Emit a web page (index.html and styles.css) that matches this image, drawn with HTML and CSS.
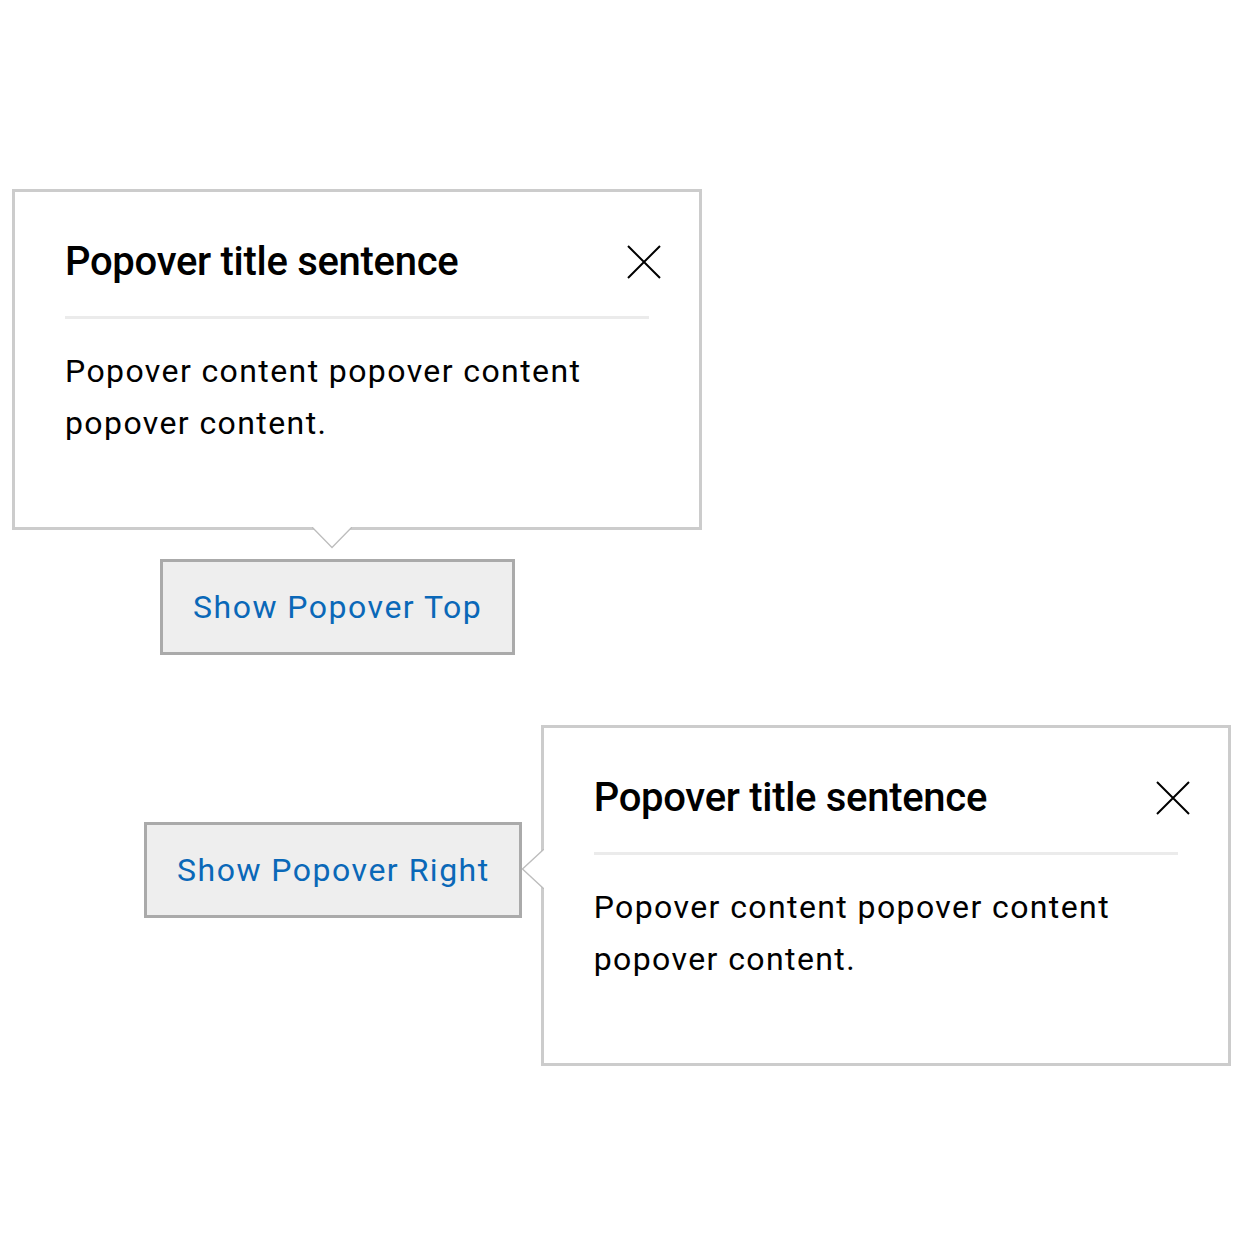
FILE: index.html
```html
<!DOCTYPE html>
<html lang="en">
<head>
<meta charset="utf-8">
<title>Popovers</title>
<link rel="stylesheet" href="styles.css">
</head>
<body>
<main class="page">
  <section class="demo demo-top">
    <div class="popover">
      <div class="popover-header">
        <h2 class="popover-title">Popover title sentence</h2>
        <button class="popover-close" aria-label="Close">
          <svg width="34" height="34" viewBox="0 0 34 34"><path d="M1 1 L33 33 M33 1 L1 33" stroke="#000" stroke-width="2" fill="none"/></svg>
        </button>
      </div>
      <div class="popover-divider"></div>
      <p class="popover-body">Popover content popover content popover content.</p>
      <svg class="arrow arrow-down" width="40" height="22" viewBox="0 0 40 22"><polygon points="0,0 40,0 20,20" fill="#fff"/><polyline points="0,0 20,20.5 40,0" fill="none" stroke="#bdbdbd" stroke-width="1.3"/></svg>
    </div>
    <button class="trigger trigger-top">Show Popover Top</button>
  </section>

  <section class="demo demo-right">
    <button class="trigger trigger-right">Show Popover Right</button>
    <div class="popover">
      <div class="popover-header">
        <h2 class="popover-title">Popover title sentence</h2>
        <button class="popover-close" aria-label="Close">
          <svg width="34" height="34" viewBox="0 0 34 34"><path d="M1 1 L33 33 M33 1 L1 33" stroke="#000" stroke-width="2" fill="none"/></svg>
        </button>
      </div>
      <div class="popover-divider"></div>
      <p class="popover-body">Popover content popover content popover content.</p>
      <svg class="arrow arrow-left" width="22" height="40" viewBox="0 0 22 40"><polygon points="22,0 22,40 2,20" fill="#fff"/><polyline points="22,0 0.5,20 22,40" fill="none" stroke="#bdbdbd" stroke-width="1.3"/></svg>
    </div>
  </section>
</main>
</body>
</html>
```

FILE: styles.css
```css
* { box-sizing: border-box; }

html, body {
  margin: 0;
  padding: 0;
  background: #fff;
}

body {
  font-family: Roboto, "Liberation Sans", Arial, sans-serif;
  color: #000;
}

.page {
  padding-top: 189px;
}

.demo {
  display: flex;
}

.demo-top {
  flex-direction: column;
  align-items: flex-start;
  padding-left: 12px;
}

.demo-right {
  flex-direction: row;
  align-items: flex-start;
  padding-left: 144px;
  margin-top: 70px;
  gap: 19px;
}

.popover {
  position: relative;
  width: 690px;
  height: 341px;
  border: 3px solid #cccccc;
  background: #fff;
  padding: 46px 50px 0 50px;
}

.popover-header {
  display: flex;
  align-items: center;
  justify-content: space-between;
}

.popover-title {
  margin: 0;
  font-size: 40px;
  line-height: 48px;
  font-weight: 500;
  letter-spacing: -0.3px;
}

.popover-close {
  border: 0;
  background: transparent;
  padding: 0;
  margin: 0 -12px 0 0;
  width: 34px;
  height: 34px;
  display: flex;
}

.popover-divider {
  height: 3px;
  background: #ebebeb;
  margin-top: 30px;
}

.popover-body {
  margin: 26px 0 0 0;
  font-size: 32px;
  line-height: 52px;
  font-weight: 400;
  letter-spacing: 1.4px;
}

.arrow {
  position: absolute;
  display: block;
}

.arrow-down {
  top: 100%;
  left: 297px;
}

.arrow-left {
  left: -22px;
  top: 121px;
}

.trigger {
  font-family: Roboto, "Liberation Sans", Arial, sans-serif;
  font-size: 32px;
  line-height: 52px;
  letter-spacing: 1.5px;
  color: #0a68b8;
  background: #eeeeee;
  border: 3px solid #aaaaaa;
  padding: 19px 30px;
  border-radius: 0;
  cursor: pointer;
}

.trigger-top {
  margin-top: 29px;
  margin-left: 148px;
}

.trigger-right {
  margin-top: 97px;
  padding-right: 29px;
}
```
